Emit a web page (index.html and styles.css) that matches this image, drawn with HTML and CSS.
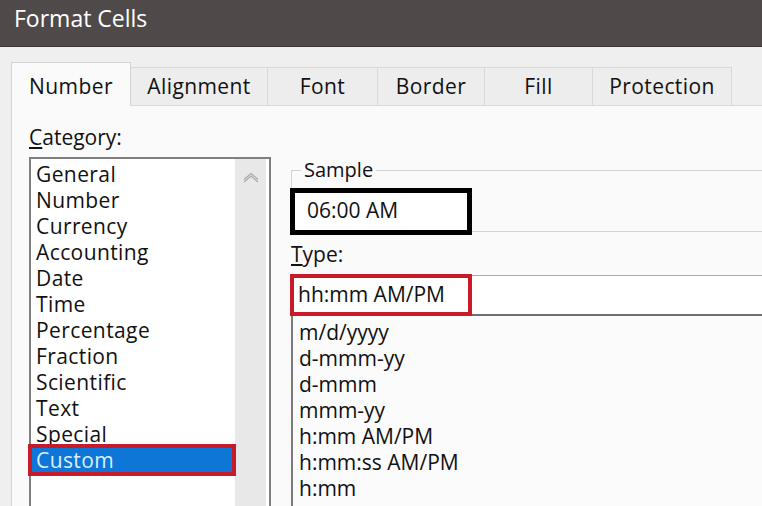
FILE: index.html
```html
<!DOCTYPE html>
<html lang="en">
<head>
    <meta charset="UTF-8">
    <title>Format Cells</title>
    <link rel="stylesheet" href="styles.css">
</head>
<body>
    <div class="window">
        <!-- Title bar -->
        <div class="titlebar">Format Cells</div>

        <div class="dialog">
            <!-- Tabs -->
            <div class="tabs">
                <div class="tab active" style="width: 120px;">Number</div>
                <div class="tab" style="width: 137px;">Alignment</div>
                <div class="tab" style="width: 110px;">Font</div>
                <div class="tab" style="width: 107px;">Border</div>
                <div class="tab" style="width: 108px;">Fill</div>
                <div class="tab" style="width: 139px;">Protection</div>
            </div>

            <!-- Number page -->
            <div class="panel">
                <div class="category-col">
                    <div class="field-label"><u>C</u>ategory:</div>
                    <div class="listbox">
                        <div class="list-items">
                            <div class="list-item">General</div>
                            <div class="list-item">Number</div>
                            <div class="list-item">Currency</div>
                            <div class="list-item">Accounting</div>
                            <div class="list-item">Date</div>
                            <div class="list-item">Time</div>
                            <div class="list-item">Percentage</div>
                            <div class="list-item">Fraction</div>
                            <div class="list-item">Scientific</div>
                            <div class="list-item">Text</div>
                            <div class="list-item">Special</div>
                            <div class="list-item selected">Custom</div>
                        </div>
                        <div class="scrollbar">
                            <svg class="scroll-up" width="16" height="11" viewBox="0 0 16 11">
                                <path d="M1 7.5 L8 1.5 L15 7.5" fill="none" stroke="#a9a9a9" stroke-width="1.2"/>
                                <path d="M1 10 L8 4 L15 10" fill="none" stroke="#a9a9a9" stroke-width="1.2"/>
                            </svg>
                        </div>
                    </div>
                </div>

                <div class="format-col">
                    <fieldset class="sample">
                        <legend>Sample</legend>
                        <div class="sample-box">06:00 AM</div>
                    </fieldset>

                    <div class="field-label type-label"><u>T</u>ype:</div>
                    <div class="type-input">
                        hh:mm AM/PM
                        <div class="mark-red"></div>
                    </div>
                    <div class="type-list">
                        <div class="list-item">m/d/yyyy</div>
                        <div class="list-item">d-mmm-yy</div>
                        <div class="list-item">d-mmm</div>
                        <div class="list-item">mmm-yy</div>
                        <div class="list-item">h:mm AM/PM</div>
                        <div class="list-item">h:mm:ss AM/PM</div>
                        <div class="list-item">h:mm</div>
                    </div>
                </div>
            </div>
        </div>
    </div>
</body>
</html>
```

FILE: styles.css
```css
body {
    margin: 0;
    width: 762px;
    height: 506px;
    overflow: hidden;
    font-family: "Open Sans", "Noto Sans", sans-serif;
    font-size: 21px;
    color: #111;
    background: #efefef;
}
.window {
    width: 762px;
    height: 506px;
    overflow: hidden;
}

/* Title bar */
.titlebar {
    height: 46px;
    line-height: 36px;
    padding-left: 14px;
    background: #4f4a49;
    border-bottom: 1px solid #3b3736;
    color: #fff;
    font-size: 23px;
}

/* Tabs */
.dialog {
    background: #efefef;
}
.tabs {
    display: flex;
    align-items: flex-end;
    height: 58px;
    padding-left: 11px;
}
.tab {
    box-sizing: border-box;
    height: 38px;
    padding-top: 5px;
    line-height: 26px;
    letter-spacing: 0.4px;
    text-align: center;
    background: #ededed;
    border: 1px solid #d9d9d9;
    border-bottom: none;
    border-left: none;
}
.tab.active {
    position: relative;
    z-index: 1;
    height: 44px;
    margin-bottom: -1px;
    padding-top: 10px;
    background: #fafafa;
    border-left: 1px solid #d3d3d3;
    border-color: #d3d3d3;
}

/* Page */
.panel {
    display: grid;
    grid-template-columns: 242px 520px;
    column-gap: 20px;
    width: 900px;
    height: 420px;
    margin-left: 11px;
    padding: 18px 0 0 17px;
    background: #fafafa;
    border-top: 1px solid #d9d9d9;
    border-left: 1px solid #d3d3d3;
}
.field-label {
    line-height: 26px;
}
.list-item {
    line-height: 26px;
    white-space: nowrap;
}

/* Category list */
.listbox {
    display: flex;
    height: 360px;
    margin-top: 7px;
    padding-top: 2px;
    box-sizing: border-box;
    background: #fff;
    border: 2px solid #808080;
}
.list-items {
    width: 204px;
    letter-spacing: 0.4px;
}
.list-items .list-item {
    padding-left: 5px;
}
.list-item.selected {
    position: relative;
    background: #0e76d6;
    color: #dcefff;
}
.mark-red,
.list-item.selected::after {
    position: absolute;
    box-sizing: border-box;
    border: 4px solid #c81a28;
}
.list-item.selected::after {
    content: "";
    left: -3px;
    top: -3px;
    width: 208px;
    height: 32px;
}
.scrollbar {
    width: 31px;
    margin-top: -2px;
    background: #e8e8e8;
    text-align: center;
}
.scroll-up {
    margin-top: 13px;
}

/* Sample */
.format-col {
    padding-top: 33px;
}
.sample {
    margin: 0;
    padding: 0;
    border: 1px solid #d2d2d2;
    border-right: none;
}
.sample legend {
    margin-left: 9px;
    padding: 0 3px;
    line-height: 26px;
    font-size: 20px;
}
.sample-box {
    box-sizing: border-box;
    width: 182px;
    height: 47px;
    margin: 5px 0 -4px -2px;
    padding-left: 12px;
    line-height: 35px;
    background: #fff;
    border: 5px solid #000;
}

/* Type */
.type-label {
    margin-top: 9px;
}
.type-input {
    position: relative;
    margin-top: 8px;
    padding: 5px 0 7px 6px;
    line-height: 26px;
    background: #fff;
    border-top: 1px solid #ababab;
    border-left: 1px solid #ababab;
}
.mark-red {
    left: -2px;
    top: -2px;
    width: 182px;
    height: 42px;
}
.type-list {
    height: 200px;
    padding: 3px 0 0 6px;
    background: #fbfbfb;
    border-top: 2px solid #6f6f6f;
    border-left: 2px solid #7a7a7a;
}
```
